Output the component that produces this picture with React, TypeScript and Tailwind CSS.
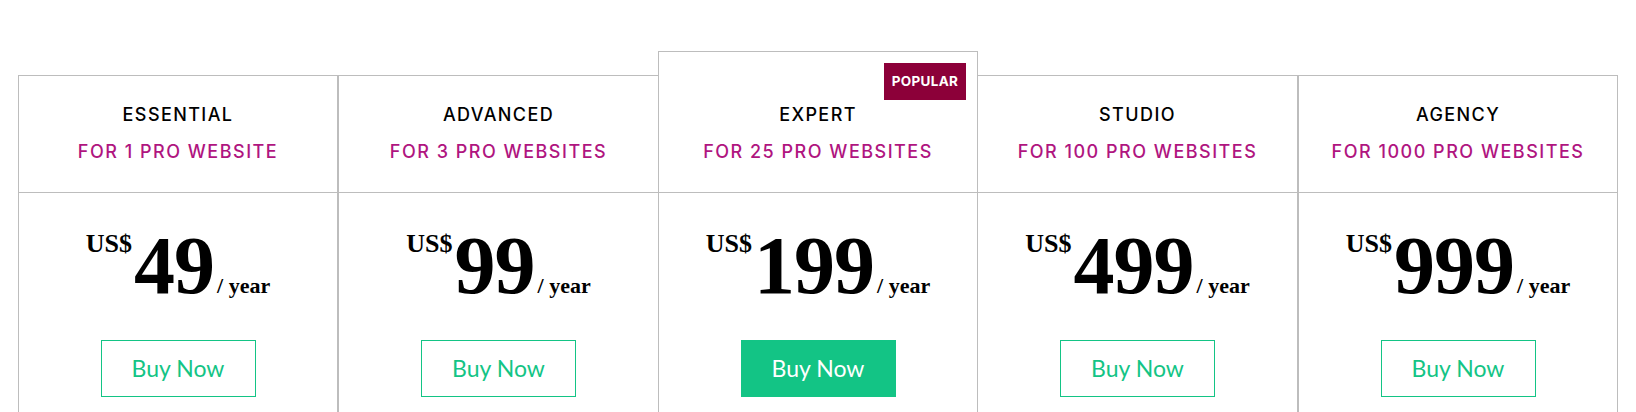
import React from "react";

type Plan = {
  name: string;
  sub: string;
  price: string;
  popular?: boolean;
  cls: string;
};

const plans: Plan[] = [
  { name: "ESSENTIAL", sub: "FOR 1 PRO WEBSITE", price: "49", cls: "border" },
  { name: "ADVANCED", sub: "FOR 3 PRO WEBSITES", price: "99", cls: "border border-r-0" },
  { name: "EXPERT", sub: "FOR 25 PRO WEBSITES", price: "199", popular: true, cls: "border" },
  { name: "STUDIO", sub: "FOR 100 PRO WEBSITES", price: "499", cls: "border border-l-0" },
  { name: "AGENCY", sub: "FOR 1000 PRO WEBSITES", price: "999", cls: "border" },
];

function Card({ p }: { p: Plan }) {
  return (
    <div
      className={`relative w-[320px] shrink-0 border-[#bdbdbd] bg-white ${p.cls} ${
        p.popular ? "mt-0" : "mt-[24px]"
      }`}
    >
      {p.popular && (
        <div className="absolute top-[11px] right-[11px] flex h-[37px] w-[82px] items-center justify-center bg-[#8c0039] text-[13.5px] font-bold tracking-[0.3px] text-white [font-family:Inter,sans-serif]">
          POPULAR
        </div>
      )}
      <div
        className={`border-b border-[#bdbdbd] pb-[28px] text-center [font-family:Inter,sans-serif] ${
          p.popular ? "pt-[51px]" : "pt-[27px]"
        }`}
      >
        <div className="text-[18px] leading-[24px] font-medium tracking-[1.4px] text-black">{p.name}</div>
        <div className="mt-[13px] text-[18px] leading-[24px] font-medium tracking-[1.5px] text-[#b0157f]">
          {p.sub}
        </div>
      </div>
      <div className="flex flex-col items-center pt-[32px] pb-[60px]">
        <div className="flex items-baseline justify-center font-bold text-black [font-family:'Liberation_Serif',serif]">
          <span className="mt-[6px] self-start text-[26px] leading-none">US$</span>
          <span className="ml-[2px] text-[82px] leading-none tracking-[-1px]">{p.price}</span>
          <span className="ml-[3px] text-[22px] leading-none">/ year</span>
        </div>
        <button
          className={`mt-[33px] flex h-[57px] w-[155px] items-center justify-center border text-[23px] [font-family:Lato,sans-serif] ${
            p.popular
              ? "border-[#13c485] bg-[#13c485] text-white"
              : "border-[#13c485] bg-white text-[#13c485]"
          }`}
        >
          Buy Now
        </button>
      </div>
    </div>
  );
}

export default function App() {
  return (
    <div className="min-h-[412px] w-full bg-white">
      <div className="flex items-start px-[18px] pt-[51px]">
        {plans.map((p) => (
          <Card key={p.name} p={p} />
        ))}
      </div>
    </div>
  );
}
